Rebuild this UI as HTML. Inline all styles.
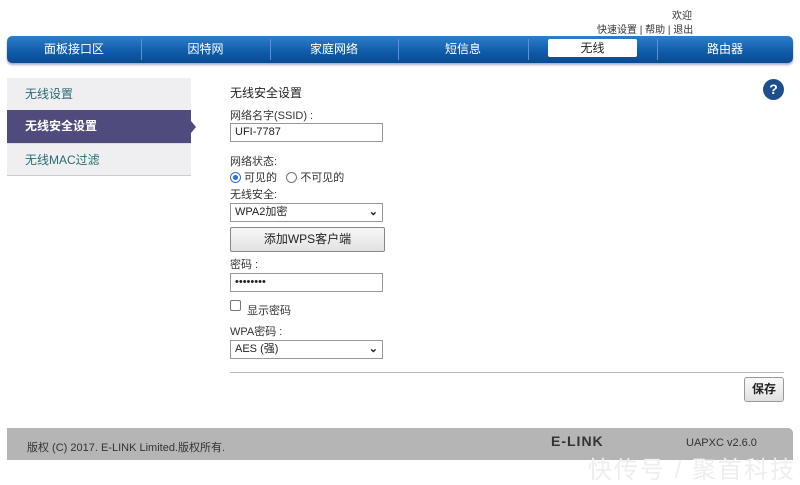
<!DOCTYPE html>
<html><head><meta charset="utf-8"><style>
*{margin:0;padding:0;box-sizing:border-box}
body{width:800px;height:479px;background:#fff;font-family:"Liberation Sans","Noto Sans CJK SC",sans-serif;font-size:11px;color:#333;position:relative;overflow:hidden}
.a{position:absolute}
.nav{left:7px;top:36px;width:786px;height:27px;border-radius:5px;background:linear-gradient(#2f7fc8,#0f5aa8 60%,#0b4a90);box-shadow:0 2px 2px #aac}
.tab{position:absolute;top:0;height:27px;line-height:27px;text-align:center;color:#fff;font-size:12px}
.sep{position:absolute;top:3px;width:1px;height:21px;background:#5a94d0}
.side{left:7px;width:184px;height:33px;line-height:33px;padding-left:18px;font-size:12px;color:#2a6a70;background:#efeff1}
.box{left:230px;width:153px;height:19px;border:1px solid #999;background:#fff;padding-left:4px;line-height:17px;font-size:11px;color:#222}
.lbl{left:230px;font-size:11px;color:#333}
</style></head><body>
<div class="a" style="left:672px;top:7px;font-size:10px">欢迎</div>
<div class="a" style="left:597px;top:21px;font-size:10px">快速设置 | 帮助 | 退出</div>
<div class="a nav">
<div class="tab" style="left:0;width:134px">面板接口区</div>
<div class="sep" style="left:134px"></div>
<div class="tab" style="left:134px;width:129px">因特网</div>
<div class="sep" style="left:263px"></div>
<div class="tab" style="left:263px;width:128px">家庭网络</div>
<div class="sep" style="left:391px"></div>
<div class="tab" style="left:391px;width:130px">短信息</div>
<div class="sep" style="left:521px"></div>
<div class="tab" style="left:541px;top:3px;width:89px;height:18px;line-height:18px;background:#fff;color:#222;border-radius:2px">无线</div>
<div class="sep" style="left:650px"></div>
<div class="tab" style="left:650px;width:136px">路由器</div>
</div>
<div class="a side" style="top:78px">无线设置</div>
<div class="a side" style="top:110px;background:#4f4c7d;color:#fff;font-weight:bold">无线安全设置</div>
<div class="a" style="left:191px;top:121px;border-left:5px solid #4f4c7d;border-top:6px solid transparent;border-bottom:6px solid transparent"></div>
<div class="a side" style="top:143px;border-bottom:1px solid #ccc;border-top:1px solid #ddd">无线MAC过滤</div>
<div class="a" style="left:763px;top:79px;width:21px;height:21px;border-radius:50%;background:#1f4e8c;color:#fff;font-weight:bold;font-size:14px;text-align:center;line-height:21px">?</div>
<div class="a lbl" style="top:84px;font-size:12px;color:#222">无线安全设置</div>
<div class="a lbl" style="top:107px">网络名字(SSID) :</div>
<div class="a box" style="top:123px">UFI-7787</div>
<div class="a lbl" style="top:153px">网络状态:</div>
<div class="a lbl" style="top:169px"><span style="display:inline-block;width:11px;height:11px;border-radius:50%;border:1px solid #2a72d0;vertical-align:-2px;background:radial-gradient(#2a72d0 35%,#fff 45%)"></span> 可见的 &nbsp;&nbsp;<span style="display:inline-block;width:11px;height:11px;border-radius:50%;border:1px solid #777;vertical-align:-2px"></span> 不可见的</div>
<div class="a lbl" style="top:186px">无线安全:</div>
<div class="a box" style="top:203px">WPA2加密<span style="position:absolute;right:4px;top:0;font-weight:bold">&#8964;</span></div>
<div class="a" style="left:230px;top:227px;width:155px;height:25px;border:1px solid #888;border-radius:2px;background:linear-gradient(#f7f7f7,#e2e2e2);text-align:center;line-height:23px;font-size:12px;color:#222">添加WPS客户端</div>
<div class="a lbl" style="top:256px">密码 :</div>
<div class="a box" style="top:273px">••••••••</div>
<div class="a" style="left:230px;top:300px;width:11px;height:11px;border:1px solid #777;border-radius:2px"></div>
<div class="a lbl" style="left:247px;top:302px">显示密码</div>
<div class="a lbl" style="top:323px">WPA密码 :</div>
<div class="a box" style="top:340px">AES (强)<span style="position:absolute;right:4px;top:0;font-weight:bold">&#8964;</span></div>
<div class="a" style="left:230px;top:372px;width:554px;height:1px;background:#bbb"></div>
<div class="a" style="left:744px;top:377px;width:40px;height:25px;border:1px solid #999;border-radius:3px;background:linear-gradient(#fafafa,#e0e0e0);text-align:center;line-height:23px;font-weight:bold;font-size:12px;color:#222">保存</div>
<div class="a" style="left:7px;top:428px;width:786px;height:32px;background:#b5b5b5;border-radius:0 5px 0 0"></div>
<div class="a" style="left:27px;top:439px;color:#333">版权 (C) 2017. E-LINK Limited.版权所有.</div>
<div class="a" style="left:551px;top:433px;font-weight:bold;font-size:14px;color:#333;letter-spacing:1px">E-LINK</div>
<div class="a" style="left:686px;top:437px;color:#333">UAPXC v2.6.0</div>
<div class="a" style="left:588px;top:450px;font-size:24px;color:#eee;letter-spacing:2px;white-space:nowrap">快传号 / 聚首科技</div>
</body></html>
